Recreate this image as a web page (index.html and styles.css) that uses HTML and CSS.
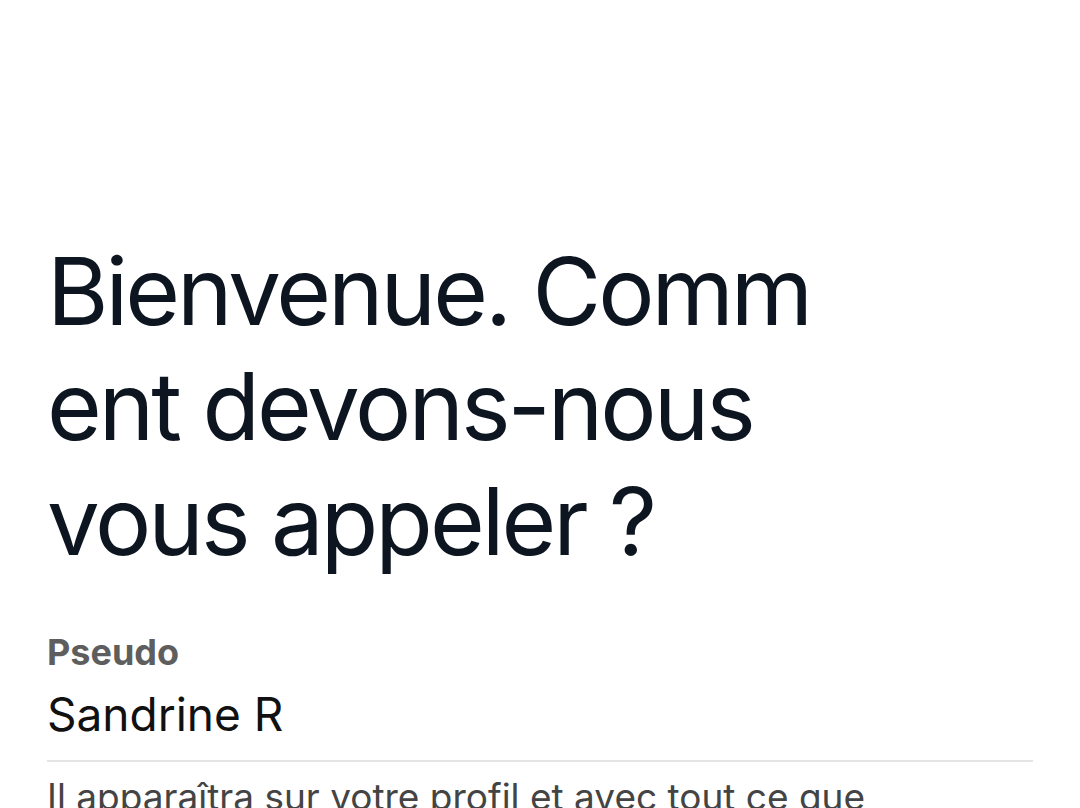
FILE: index.html
```html
<!DOCTYPE html>
<html lang="fr">
<head>
    <meta charset="UTF-8">
    <meta name="viewport" content="width=device-width, initial-scale=1.0">
    <link rel="stylesheet" href="styles.css">
    <title>Pseudo</title>
</head>
<body>
    <div class="screen">
        <h1 class="title">Bienvenue. Comm<br>ent devons-nous<br>vous appeler ?</h1>
        <div class="field">
            <label class="field-label" for="pseudo">Pseudo</label>
            <div class="field-value" id="pseudo">Sandrine R</div>
        </div>
        <p class="hint">Il apparaîtra sur votre profil et avec tout ce que vous partagerez.</p>
    </div>
</body>
</html>
```

FILE: styles.css
```css
body {
    margin: 0;
    background-color: #fff;
    font-family: 'Inter', 'Roboto', sans-serif;
    overflow: hidden;
}

.screen {
    padding: 234px 47px 0 47px;
}

.title {
    margin: 0;
    font-size: 94px;
    font-weight: 400;
    line-height: 115px;
    letter-spacing: -3px;
    color: #0c1520;
}

.field {
    margin-top: 51px;
    border-bottom: 2px solid #e4e4e4;
    padding-bottom: 18px;
}

.field-label {
    display: block;
    font-size: 36px;
    line-height: 44px;
    font-weight: 700;
    color: #5e5e5e;
}

.field-value {
    margin-top: 12px;
    font-size: 46px;
    line-height: 56px;
    color: #111;
}

.hint {
    margin: 13px 0 0;
    max-width: 880px;
    font-size: 37px;
    line-height: 44px;
    color: #444;
}
```
